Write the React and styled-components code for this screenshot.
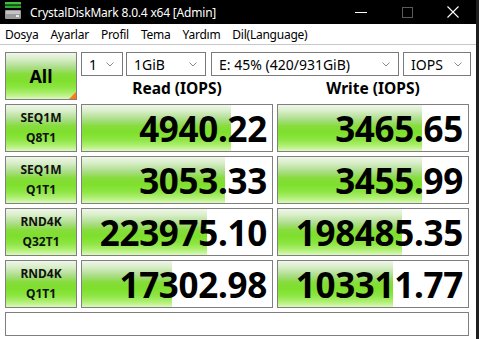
import React from 'react';
import styled, { createGlobalStyle } from 'styled-components';

const GlobalStyle = createGlobalStyle`
    html, body {
        margin: 0;
        padding: 0;
        background: #1f1f1f;
    }
    * {
        box-sizing: border-box;
    }
`;

const GREEN = `linear-gradient(to bottom,
    #f0f7ea 0%,
    #d6edc6 14%,
    #aadd86 32%,
    #86dc3c 46%,
    #7ee02c 60%,
    #8ee644 76%,
    #b4f07a 90%,
    #dcf8c0 100%)`;

const tests = [
    { top: 'SEQ1M', bottom: 'Q8T1', read: '4940.22', readPct: 0.785, write: '3465.65', writePct: 0.76 },
    { top: 'SEQ1M', bottom: 'Q1T1', read: '3053.33', readPct: 0.752, write: '3455.99', writePct: 0.76 },
    { top: 'RND4K', bottom: 'Q32T1', read: '223975.10', readPct: 0.658, write: '198485.35', writePct: 0.653 },
    { top: 'RND4K', bottom: 'Q1T1', read: '17302.98', readPct: 0.474, write: '103311.77', writePct: 0.604 },
];

const menu = ['Dosya', 'Ayarlar', 'Profil', 'Tema', 'Yardım', 'Dil(Language)'];

function DriveIcon() {
    return (
        <svg width="16" height="17" viewBox="0 0 16 17">
            <rect x="0" y="0" width="16" height="2.5" fill="#3fbf3f" />
            <rect x="0" y="3.5" width="16" height="2.5" fill="#2ea82e" />
            <rect x="0" y="8" width="16" height="9" rx="1" fill="#9a9a9a" />
            <rect x="1" y="9" width="14" height="3" fill="#c4c4c4" />
            <rect x="11" y="13" width="3" height="2" fill="#e8e8e8" />
        </svg>
    );
}

function Chevron() {
    return (
        <svg width="8" height="5" viewBox="0 0 8 5">
            <path d="M0.5 0.5 L4 4 L7.5 0.5" fill="none" stroke="#8a8a8a" strokeWidth="1" />
        </svg>
    );
}

function App() {
    return (
        <Window>
            <GlobalStyle />
            <TitleBar>
                <TitleLeft>
                    <DriveIcon />
                    <span>CrystalDiskMark 8.0.4 x64 [Admin]</span>
                </TitleLeft>
                <Controls>
                    <Control>
                        <svg width="12" height="12" viewBox="0 0 12 12">
                            <path d="M0 6.5 H12" stroke="#ffffff" strokeWidth="1" />
                        </svg>
                    </Control>
                    <Control>
                        <svg width="11" height="11" viewBox="0 0 11 11">
                            <rect x="0.5" y="0.5" width="10" height="10" fill="none" stroke="#5a5a5a" strokeWidth="1" />
                        </svg>
                    </Control>
                    <Control>
                        <svg width="12" height="12" viewBox="0 0 12 12">
                            <path d="M0.5 0.5 L11.5 11.5 M11.5 0.5 L0.5 11.5" stroke="#ffffff" strokeWidth="1.1" />
                        </svg>
                    </Control>
                </Controls>
            </TitleBar>
            <MenuBar>
                {menu.map((m) => (
                    <MenuItem key={m}>{m}</MenuItem>
                ))}
            </MenuBar>
            <Main>
                <AllButton>All</AllButton>
                <Selects>
                    <Select $w={42}><span>1</span><Chevron /></Select>
                    <Select $w={80} $gap={3}><span>1GiB</span><Chevron /></Select>
                    <Select $w={188} $gap={5}><span>E: 45% (420/931GiB)</span><Chevron /></Select>
                    <Select $w={68} $gap={4}><span>IOPS</span><Chevron /></Select>
                </Selects>
                <Heading>Read (IOPS)</Heading>
                <Heading>Write (IOPS)</Heading>
                {tests.map((t) => (
                    <React.Fragment key={t.top + t.bottom}>
                        <TestLabel>
                            <span>{t.top}</span>
                            <span>{t.bottom}</span>
                        </TestLabel>
                        <Result>
                            <Bar style={{ width: `${t.readPct * 100}%` }} />
                            <Value>{t.read}</Value>
                        </Result>
                        <Result>
                            <Bar style={{ width: `${t.writePct * 100}%` }} />
                            <Value>{t.write}</Value>
                        </Result>
                    </React.Fragment>
                ))}
                <Comment />
            </Main>
        </Window>
    );
}

const Window = styled.div`
    width: 476px;
    height: 339px;
    background: #ffffff;
    font-family: "Noto Sans", "Open Sans", sans-serif;
    overflow: hidden;
`;

const TitleBar = styled.div`
    height: 24px;
    background: #000000;
    display: flex;
    align-items: center;
    justify-content: space-between;
    color: #ffffff;
`;

const TitleLeft = styled.div`
    display: flex;
    align-items: center;
    gap: 9px;
    padding-left: 5px;
    font-size: 12px;
    letter-spacing: -0.2px;
    svg {
        margin-top: -3px;
    }
`;

const Controls = styled.div`
    display: flex;
    align-items: center;
    height: 100%;
`;

const Control = styled.div`
    width: 46px;
    height: 100%;
    display: flex;
    align-items: center;
    justify-content: center;
`;

const MenuBar = styled.div`
    height: 21px;
    display: flex;
    align-items: center;
    padding-left: 5px;
    gap: 12px;
    border-bottom: 1px solid #c8c8c8;
    font-size: 12px;
    color: #000000;
`;

const MenuItem = styled.span`
    letter-spacing: -0.25px;
`;

const Main = styled.div`
    display: grid;
    grid-template-columns: 72px 192px 192px;
    grid-template-rows: 24px 20px repeat(4, 48px) 24px;
    column-gap: 4px;
    row-gap: 4px;
    padding: 7px 0 0 5px;
`;

const Cell = styled.div`
    border: 1px solid #7f7f7f;
`;

const AllButton = styled(Cell)`
    grid-row: 1 / span 2;
    position: relative;
    background: ${GREEN};
    display: flex;
    align-items: center;
    justify-content: center;
    font-size: 18px;
    font-weight: 700;
    color: #000000;
    &::after {
        content: '';
        position: absolute;
        right: 0;
        bottom: 0;
        border-style: solid;
        border-width: 0 0 7px 7px;
        border-color: transparent transparent #ff7a10 transparent;
    }
`;

const Selects = styled.div`
    grid-column: 2 / span 2;
    display: flex;
`;

const Select = styled.div`
    width: ${(p) => p.$w}px;
    margin-left: ${(p) => p.$gap || 0}px;
    flex: none;
    border: 1px solid #7a7a7a;
    display: flex;
    align-items: center;
    justify-content: space-between;
    padding: 0 8px 0 7px;
    font-size: 14px;
    color: #000000;
`;

const Heading = styled.div`
    display: flex;
    align-items: center;
    justify-content: center;
    font-size: 15.5px;
    font-weight: 700;
    color: #000000;
    margin-top: -4px;
`;

const TestLabel = styled(Cell)`
    background: ${GREEN};
    display: flex;
    flex-direction: column;
    align-items: center;
    justify-content: center;
    font-size: 12px;
    font-weight: 700;
    line-height: 20px;
    color: #111111;
`;

const Result = styled(Cell)`
    position: relative;
    background: #ffffff;
    display: flex;
    align-items: center;
    justify-content: flex-end;
    padding-right: 5px;
`;

const Bar = styled.div`
    position: absolute;
    left: 0;
    top: 0;
    bottom: 0;
    background: ${GREEN};
`;

const Value = styled.span`
    position: relative;
    font-size: 35px;
    font-weight: 700;
    color: #000000;
    letter-spacing: -0.3px;
    line-height: 1;
`;

const Comment = styled(Cell)`
    grid-column: 1 / span 3;
`;

export default App;
